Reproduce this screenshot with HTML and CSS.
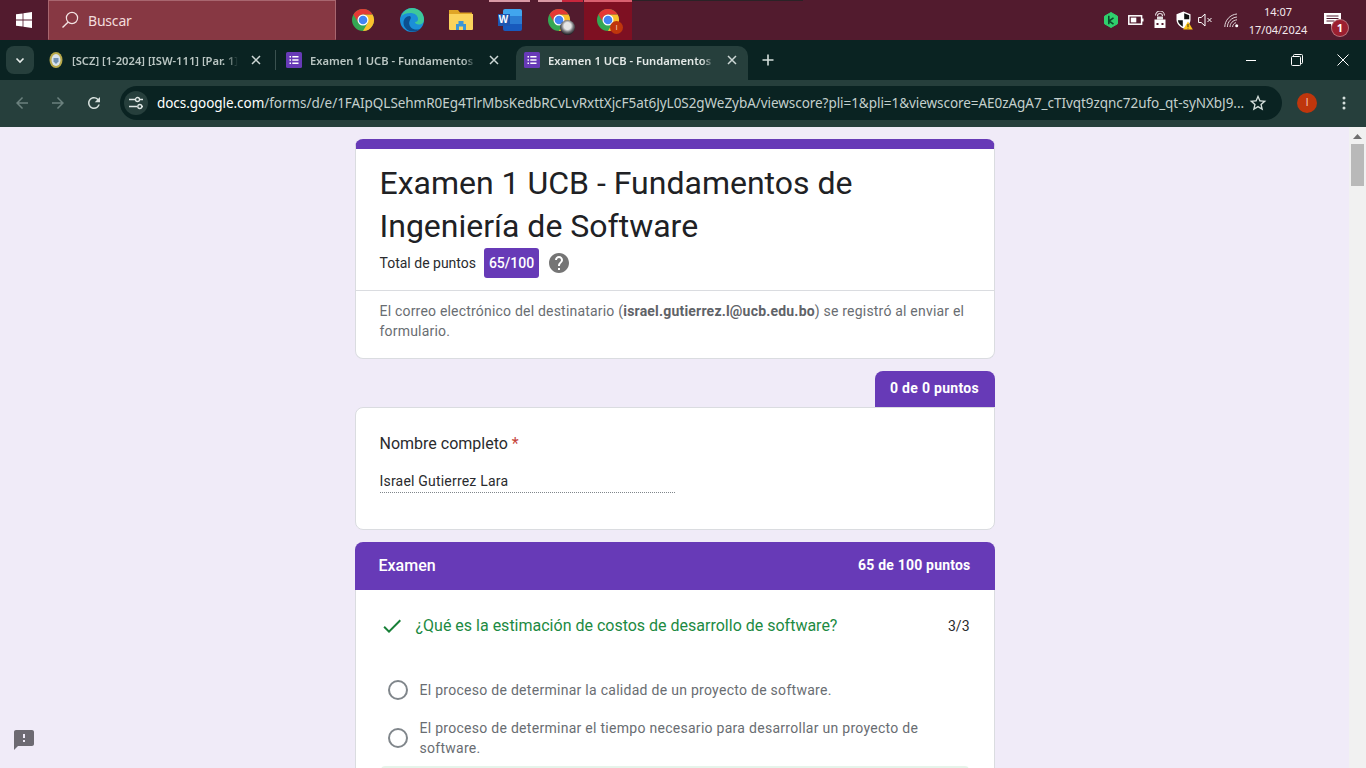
FILE: index.html
```html
<!DOCTYPE html>
<html lang="es">
<head>
<meta charset="utf-8">
<title>Examen 1 UCB - Fundamentos de Ingeniería de Software</title>
<link rel="stylesheet" href="styles.css">
</head>
<body>
<svg class="defs" aria-hidden="true">
  <symbol id="chrome" viewBox="0 0 24 24">
    <circle cx="12" cy="12" r="11" fill="#34a853"/>
    <path d="M12 6.5H21.53A11 11 0 0 1 12 23L16.76 14.75z" fill="#fbc02d"/>
    <path d="M21.53 6.5H12a5.5 5.5 0 0 0-4.76 8.25L2.47 6.5A11 11 0 0 1 21.53 6.5z" fill="#e53935"/>
    <circle cx="12" cy="12" r="5.5" fill="#fff"/>
    <circle cx="12" cy="12" r="4.3" fill="#4285f4"/>
  </symbol>
  <symbol id="form" viewBox="0 0 16 16">
    <rect width="16" height="16" rx="1.5" fill="#673ab7"/>
    <path d="M3.5 4h1.5v1.5H3.5zM6.3 4h6.2v1.5H6.3zM3.5 7.2h1.5v1.5H3.5zM6.3 7.2h6.2v1.5H6.3zM3.5 10.4h1.5v1.5H3.5zM6.3 10.4h6.2v1.5H6.3z" fill="#fff"/>
  </symbol>
  <symbol id="x" viewBox="0 0 12 12">
    <path d="M2 2l8 8M10 2l-8 8" fill="none" stroke="currentColor" stroke-width="1.5"/>
  </symbol>
</svg>

<div class="taskbar">
  <div class="start">
    <svg width="16" height="16" viewBox="0 0 16 16"><path d="M0 2.3l6.6-.9v6.2H0zM7.4 1.3L16 0v7.6H7.4zM0 8.4h6.6v6.2L0 13.7zM7.4 8.4H16V16l-8.6-1.2z" fill="#fff"/></svg>
  </div>
  <div class="search">
    <svg width="18" height="18" viewBox="0 0 18 18"><circle cx="11" cy="7" r="5.6" fill="none" stroke="#f3e3e3" stroke-width="1.2"/><path d="M7 11.2L1.5 16.5" stroke="#f3e3e3" stroke-width="1.4"/></svg>
    <span>Buscar</span>
  </div>
  <div class="apps">
    <div class="app"><svg width="24" height="24"><use href="#chrome"/></svg></div>
    <div class="app">
      <svg width="24" height="24" viewBox="0 0 24 24">
        <circle cx="12" cy="12" r="12" fill="#1b8fd8"/>
        <path d="M1 9C3 3 8 0 12 0c7 0 12 5 12 11.500 0 3-2 5-5 5-2.500 0-4-1-4-2.500 2 0 3-1 3-3C18 7 14 5 10.500 5 6 5 2.500 6.500 1 9z" fill="#3ec89a"/>
        <path d="M10 8c-4 0-6.500 3-6.500 7 0 4 3.500 8 8.500 8.500 3 .3 6-.5 8-2.500-3 1-7 .7-9-1.500-2-2.200-2.500-5-1-7.500 .7-1.300 1.500-2.800 0-4z" fill="#0c4f8f"/>
      </svg>
    </div>
    <div class="app">
      <svg width="24" height="22" viewBox="0 0 24 22">
        <path d="M0 1h9l2 2.500h12V8H0z" fill="#e0a526"/>
        <path d="M0 5h24v15a1 1 0 0 1-1 1H1a1 1 0 0 1-1-1z" fill="#fbd35c"/>
        <path d="M7 21v-6h2.500v-3h5v3H17v6h-3v-3.500h-4V21z" fill="#3d96d6"/>
      </svg>
    </div>
    <div class="app running">
      <div class="word">
        <i class="w1"></i><i class="w2"></i><i class="w3"></i>
        <b>W</b>
      </div>
    </div>
    <div class="app running second-run">
      <div class="badged">
        <svg width="24" height="24"><use href="#chrome"/></svg>
        <span class="mini-photo"></span>
      </div>
    </div>
    <div class="app active">
      <div class="badged">
        <svg width="24" height="24"><use href="#chrome"/></svg>
        <span class="mini-i">I</span>
      </div>
    </div>
  </div>
  <div class="tray">
    <div class="ti kasp">
      <svg width="16" height="16" viewBox="0 0 16 16"><path d="M8 .5l6.500 3.700v7.600L8 15.500l-6.500-3.700V4.200z" fill="#2fd06d" stroke="#2fd06d" stroke-linejoin="round"/><path d="M5.800 3.800v8.400M10.500 5.800L6 9l4.500 3.200" fill="none" stroke="#0b4a2b" stroke-width="1.600"/></svg>
    </div>
    <div class="ti">
      <svg width="16" height="12" viewBox="0 0 16 12"><rect x=".8" y="1.800" width="12.800" height="8.400" fill="none" stroke="#fff" stroke-width="1.500"/><rect x="2.800" y="3.600" width="5.500" height="4.800" fill="#fff"/><rect x="14" y="4.500" width="1.500" height="3" fill="#fff"/></svg>
    </div>
    <div class="ti">
      <svg width="14" height="18" viewBox="0 0 14 18"><path d="M2.500 4.500a4.500 4.500 0 0 1 9 0M4.500 5a2.500 2.500 0 0 1 5 0" fill="none" stroke="#e8e0e3" stroke-width="1.100"/><rect x="4" y="5.500" width="6" height="3" fill="#ddd"/><rect x="1.500" y="8.500" width="11" height="8.500" fill="#fff"/><rect x="3.500" y="12" width="2" height="2" fill="#521b2e"/><rect x="8.500" y="12" width="2" height="2" fill="#521b2e"/></svg>
    </div>
    <div class="ti">
      <svg width="17" height="19" viewBox="0 0 17 19"><path d="M7.500 .5L14.500 3.200v5.300c0 4-2.700 6.900-7 9-4.300-2.100-7-5-7-9V3.200z" fill="#fff"/><path d="M8.200 2.300l5 1.900v4H8.200zM6.800 9.300v6.400C4 14 2.200 12 1.900 9.300z" fill="#111"/><path d="M12 10.500l4.800 8h-9.600z" fill="#fcc419"/><path d="M11.600 13h.8v3h-.8zM11.600 16.800h.8v.8h-.8z" fill="#111"/></svg>
    </div>
    <div class="ti speaker">
      <svg width="15" height="14" viewBox="0 0 15 14"><path d="M.6 4.500h2.600L7 1v12L3.200 9.500H.6z" fill="none" stroke="#fff" stroke-width="1"/><path d="M9.500 5l4 4M13.500 5l-4 4" stroke="#fff" stroke-width="1"/></svg>
    </div>
    <div class="ti">
      <svg width="16" height="15" viewBox="0 0 16 15"><path d="M.8 14C.8 7.500 6 1.500 13 1M3.400 14c0-5 4-9.500 9.600-10M6 14c0-3.500 2.800-6.800 7-7.200M8.600 14c0-2 1.500-4 3.400-4.300" fill="none" stroke="#e3d8dc" stroke-width="1"/><circle cx="12.700" cy="12.700" r="1.500" fill="#fff"/></svg>
    </div>
    <div class="clock"><span>14:07</span><span>17/04/2024</span></div>
    <div class="notif">
      <svg width="17" height="15" viewBox="0 0 17 15"><path d="M0 0h17v11H10l-3 3v-3H0z" fill="#fff"/><path d="M2.500 3h12M2.500 5.500h12M2.500 8h8" stroke="#521b2e" stroke-width="1"/></svg>
      <span class="notif-count">1</span>
    </div>
  </div>
</div>

<div class="tabstrip">
  <div class="tab-menu">
    <svg width="12" height="12" viewBox="0 0 12 12"><path d="M2.500 4.500L6 8l3.500-3.500" fill="none" stroke="#e6ecea" stroke-width="1.600"/></svg>
  </div>
  <div class="tab first">
    <svg class="fav" width="16" height="16" viewBox="0 0 16 16"><ellipse cx="8" cy="8" rx="6.500" ry="8" fill="#b9a94a"/><ellipse cx="8" cy="8" rx="4.500" ry="6" fill="#d8e2ea"/><path d="M5.500 6h5v3.500L8 12 5.500 9.500z" fill="#6f8fb3"/></svg>
    <span class="tab-title">[SCZ] [1-2024] [ISW-111] [Par. 1]</span>
    <svg class="tab-x" width="12" height="12"><use href="#x"/></svg>
  </div>
  <div class="tab-sep"></div>
  <div class="tab second">
    <svg class="fav" width="16" height="16"><use href="#form"/></svg>
    <span class="tab-title">Examen 1 UCB - Fundamentos de Ingeniería</span>
    <svg class="tab-x" width="12" height="12"><use href="#x"/></svg>
  </div>
  <div class="tab third">
    <svg class="fav" width="16" height="16"><use href="#form"/></svg>
    <span class="tab-title">Examen 1 UCB - Fundamentos de Ingeniería</span>
    <svg class="tab-x" width="12" height="12"><use href="#x"/></svg>
  </div>
  <svg class="new-tab" width="14" height="14" viewBox="0 0 14 14"><path d="M7 1.500v11M1.500 7h11" stroke="#d5dfdc" stroke-width="1.600"/></svg>
  <div class="win-controls">
    <div class="wc"><svg width="12" height="12" viewBox="0 0 12 12"><path d="M1 6.500h10" stroke="#fff" stroke-width="1"/></svg></div>
    <div class="wc"><svg width="12" height="12" viewBox="0 0 12 12"><rect x=".5" y="2.500" width="9" height="9" rx="1" fill="none" stroke="#fff"/><path d="M2.500 2.500V1.500a1 1 0 0 1 1-1h7a1 1 0 0 1 1 1v7a1 1 0 0 1-1 1H9.500" fill="none" stroke="#fff"/></svg></div>
    <div class="wc"><svg width="12" height="12" viewBox="0 0 12 12"><path d="M.5.500l11 11M11.500.500l-11 11" stroke="#fff" stroke-width="1"/></svg></div>
  </div>
</div>

<div class="toolbar">
  <div class="nav-btn dim"><svg width="18" height="18" viewBox="0 0 24 24"><path d="M20 11H7.830l5.590-5.590L12 4l-8 8 8 8 1.410-1.410L7.830 13H20v-2z"/></svg></div>
  <div class="nav-btn dim"><svg width="18" height="18" viewBox="0 0 24 24"><path d="M4 11h12.170l-5.590-5.590L12 4l8 8-8 8-1.410-1.410L16.170 13H4v-2z"/></svg></div>
  <div class="nav-btn"><svg width="18" height="18" viewBox="0 0 24 24"><path d="M17.650 6.350A7.958 7.958 0 0 0 12 4c-4.420 0-7.990 3.580-7.990 8s3.570 8 7.990 8c3.730 0 6.840-2.550 7.730-6h-2.080A5.990 5.990 0 0 1 12 18c-3.310 0-6-2.690-6-6s2.690-6 6-6c1.660 0 3.140.69 4.220 1.780L13 11h7V4l-2.350 2.350z"/></svg></div>
  <div class="omnibox">
    <div class="tune"><svg width="16" height="16" viewBox="0 0 16 16"><path d="M1 4.500h6M1 11.500h8" stroke="#dfe7e5" stroke-width="1.400"/><path d="M12 4.500h3M14 11.500h1" stroke="#dfe7e5" stroke-width="1.400"/><circle cx="9.500" cy="4.500" r="2" fill="none" stroke="#dfe7e5" stroke-width="1.300"/><circle cx="11.800" cy="11.500" r="2" fill="none" stroke="#dfe7e5" stroke-width="1.300"/></svg></div>
    <div class="url"><span class="host">docs.google.com</span>/forms/d/e/1FAIpQLSehmR0Eg4TlrMbsKedbRCvLvRxttXjcF5at6JyL0S2gWeZybA/viewscore?pli=1&amp;pli=1&amp;viewscore=AE0zAgA7_cTIvqt9zqnc72ufo_qt-syNXbJ9...</div>
    <svg class="star" width="20" height="20" viewBox="0 0 24 24"><path d="M22 9.240l-7.190-.62L12 2 9.190 8.630 2 9.240l5.460 4.730L5.820 21 12 17.270 18.180 21l-1.630-7.030L22 9.240zM12 15.400l-3.760 2.270 1-4.280-3.320-2.880 4.380-.38L12 6.100l1.710 4.040 4.380.38-3.320 2.880 1 4.280L12 15.400z"/></svg>
  </div>
  <div class="avatar">I</div>
  <svg class="kebab" width="4" height="14" viewBox="0 0 4 14"><circle cx="2" cy="2" r="1.500"/><circle cx="2" cy="7" r="1.500"/><circle cx="2" cy="12" r="1.500"/></svg>
</div>

<div class="viewport">
  <main class="page">
    <div class="column">
      <section class="card head-card">
        <div class="head-main">
          <h1>Examen 1 UCB - Fundamentos de Ingeniería de Software</h1>
          <div class="total">
            <span>Total de puntos</span>
            <span class="score">65/100</span>
            <svg class="help" width="24" height="24" viewBox="0 0 24 24"><path d="M12 2C6.480 2 2 6.480 2 12s4.480 10 10 10 10-4.480 10-10S17.520 2 12 2zm1 17h-2v-2h2v2zm2.070-7.750l-.9.92C13.450 12.900 13 13.500 13 15h-2v-.5c0-1.100.45-2.100 1.170-2.830l1.240-1.260c.37-.36.59-.86.59-1.410 0-1.100-.9-2-2-2s-2 .9-2 2H8c0-2.210 1.790-4 4-4s4 1.790 4 4c0 .88-.36 1.680-.93 2.250z"/></svg>
          </div>
        </div>
        <p class="recipient">El correo electrónico del destinatario (<b>israel.gutierrez.l@ucb.edu.bo</b>) se registró al enviar el formulario.</p>
      </section>

      <div class="pill-row"><span class="pill">0 de 0 puntos</span></div>
      <section class="card name-card">
        <div class="name-label">Nombre completo <span class="req">*</span></div>
        <div class="name-value">Israel Gutierrez Lara</div>
      </section>

      <section class="card exam-card">
        <header class="exam-head">
          <span class="exam-title">Examen</span>
          <span class="exam-score">65 de 100 puntos</span>
        </header>
        <div class="question">
          <svg class="check" width="24" height="24" viewBox="0 0 24 24"><path d="M9 16.170L4.830 12l-1.420 1.410L9 19 21 7l-1.410-1.410z"/></svg>
          <span class="q-text">¿Qué es la estimación de costos de desarrollo de software?</span>
          <span class="q-score">3/3</span>
        </div>
        <div class="option">
          <span class="radio"></span>
          <span class="opt-text">El proceso de determinar la calidad de un proyecto de software.</span>
        </div>
        <div class="option">
          <span class="radio"></span>
          <span class="opt-text">El proceso de determinar el tiempo necesario para desarrollar un proyecto de software.</span>
        </div>
        <div class="option-correct"></div>
      </section>
    </div>
  </main>
  <div class="scrollbar">
    <svg class="sb-arrow" width="9" height="5" viewBox="0 0 9 5"><path d="M4.500 0L9 5H0z"/></svg>
    <div class="sb-thumb"></div>
  </div>
  <svg class="feedback" width="24" height="24" viewBox="0 0 24 24"><path d="M20 2H4c-1.100 0-1.990.9-1.990 2L2 22l4-4h14c1.100 0 2-.9 2-2V4c0-1.100-.9-2-2-2zm-7 12h-2v-2h2v2zm0-4h-2V6h2v4z"/></svg>
</div>
</body>
</html>
```
FILE: styles.css
```css
* { box-sizing: border-box; }
html, body { margin: 0; padding: 0; height: 100%; overflow: hidden; }
body {
  width: 1366px;
  height: 768px;
  display: flex;
  flex-direction: column;
  font-family: Roboto, "Liberation Sans", sans-serif;
  background: #f0ebf8;
}
.defs { display: none; }

/* Taskbar */
.taskbar {
  flex: 0 0 40px;
  display: flex;
  position: relative;
  background: #521b2e;
  color: #fff;
}
.taskbar::after {
  content: "";
  position: absolute;
  top: 0; left: 632px;
  width: 171px;
  height: 1px;
  background: #2a2226;
}
.start { width: 48px; display: flex; align-items: center; justify-content: center; }
.search {
  width: 288px;
  display: flex;
  align-items: center;
  gap: 9px;
  padding-left: 12px;
  background: #873843;
  border: 1px solid #a8666f;
  border-bottom-color: #873843;
  font: 14px "Noto Sans", sans-serif;
  letter-spacing: -.2px;
  color: #f2dcdc;
}
.apps { display: flex; margin-left: 2px; }
.app {
  width: 49px;
  display: flex;
  align-items: center;
  justify-content: center;
  position: relative;
}
.app.running::before {
  content: "";
  position: absolute;
  top: 0; left: 4px; right: 4px;
  height: 2px;
  background: #d99aa5;
}
.app.second-run::before {
  right: 0;
  background: linear-gradient(to right, #d99aa5 0 24px, #c8263c 24px);
}
.app.active { background: #7e1022; width: 48px; margin-left: 1px; }
.app.active::before {
  content: "";
  position: absolute;
  top: 0; left: 0; right: 0;
  height: 2px;
  background: #d9606f;
}
.word { position: relative; width: 24px; height: 22px; }
.word i { position: absolute; left: 5px; right: 0; height: 7.33px; }
.w1 { top: 0; background: #41a5ee; border-radius: 2px 2px 0 0; }
.w2 { top: 7.33px; background: #2b7cd3; }
.w3 { top: 14.66px; background: #185abd; border-radius: 0 0 2px 2px; }
.word b {
  position: absolute;
  left: 0; top: 5px;
  width: 12px; height: 12px;
  background: #1d56b0;
  color: #fff;
  font: 700 10px/12px "Liberation Sans", sans-serif;
  text-align: center;
}
.badged { position: relative; width: 24px; height: 24px; }
.mini-photo {
  position: absolute;
  right: -4px; bottom: -3px;
  width: 15px; height: 15px;
  border-radius: 50%;
  background: radial-gradient(circle at 50% 40%, #e5e5e5 0 30%, #77777c 50%, #1e1e22 75%);
}
.mini-i {
  position: absolute;
  right: -3px; bottom: -2px;
  width: 13px; height: 13px;
  border-radius: 50%;
  background: #bf360c;
  color: #f4c9b8;
  font: 8px/13px Roboto, sans-serif;
  text-align: center;
}
.tray { margin-left: auto; display: flex; align-items: center; }
.ti { width: 24px; display: flex; align-items: center; justify-content: center; }
.ti.kasp { padding-right: 3px; }
.ti.speaker { padding-right: 6px; }
.clock {
  width: 70px;
  margin-left: -1px;
  display: flex;
  flex-direction: column;
  align-items: center;
  gap: 3px;
  font: 11px/15px "Noto Sans", sans-serif;
  color: #f3e9ec;
}
.notif { position: relative; width: 53px; display: flex; padding-left: 11px; }
.notif-count {
  position: absolute;
  left: 19px; top: 7px;
  width: 16px; height: 16px;
  border-radius: 50%;
  background: #9c1f30;
  box-shadow: 0 0 0 1px #b9757f;
  font: 700 11px/16px "Noto Sans", sans-serif;
  text-align: center;
}

/* Tab strip */
.tabstrip {
  flex: 0 0 40px;
  display: flex;
  align-items: flex-end;
  background: #0a2322;
  position: relative;
}
.tab-menu {
  width: 28px; height: 28px;
  margin: 0 0 6px 6px;
  border-radius: 8px;
  background: #263f3c;
  display: flex; align-items: center; justify-content: center;
}
.tab {
  display: flex;
  align-items: center;
  height: 34px;
  padding-bottom: 6px;
  font: 600 11.200px "Noto Sans", sans-serif;
  color: #b9c5c2;
}
.fav { flex: none; margin-right: 8px; }
.tab-title {
  flex: 1;
  min-width: 0;
  overflow: hidden;
  white-space: nowrap;
  -webkit-mask-image: linear-gradient(to left, transparent 0, #000 12px);
  mask-image: linear-gradient(to left, transparent 0, #000 12px);
}
.tab-x { flex: none; margin-left: 12px; color: #cdd7d5; }
.tab.first { margin-left: 14px; width: 227px; padding-right: 13px; }
.tab-sep { width: 1px; height: 20px; margin: 0 0 10px 0; background: #3a514f; }
.tab.second { margin-left: 10px; width: 214px; }
.tab.third {
  margin-left: 16px;
  width: 232px;
  padding-left: 8px;
  padding-right: 10px;
  background: #263f3c;
  border-radius: 10px 10px 0 0;
  color: #e3e9e7;
}
.new-tab { margin: 0 0 13px 13px; }
.win-controls { margin-left: auto; align-self: stretch; display: flex; align-items: center; }
.wc { width: 46px; display: flex; justify-content: center; }

/* Toolbar */
.toolbar {
  flex: 0 0 47px;
  display: flex;
  align-items: center;
  background: #263f3c;
  padding: 0 0 1px 4px;
  fill: #d5dfdc;
}
.nav-btn { width: 36px; display: flex; justify-content: center; }
.nav-btn.dim { fill: #6b817e; }
.omnibox {
  flex: 0 0 1162px;
  height: 34px;
  margin-left: 8px;
  display: flex;
  align-items: center;
  border-radius: 17px;
  background: #0a2322;
}
.tune {
  flex: none;
  width: 24px; height: 24px;
  margin-left: 4px;
  border-radius: 50%;
  background: #263f3c;
  display: flex; align-items: center; justify-content: center;
}
.url {
  flex: none;
  width: 1090px;
  margin-left: 9px;
  overflow: hidden;
  white-space: nowrap;
  font: 13.500px "Noto Sans", sans-serif;
  letter-spacing: -.05px;
  color: #c4d0cd;
}
.host { color: #fff; }
.star { margin-left: 1px; flex: none; }
.avatar {
  width: 20px; height: 20px;
  margin-left: 15px;
  border-radius: 50%;
  background: #bf360c;
  color: #f4c9b8;
  font: 10px/20px Roboto, sans-serif;
  text-align: center;
}
.kebab { margin-left: 25px; }

/* Page */
.viewport { flex: 1; min-height: 0; display: flex; position: relative; background: #f0ebf8; }
.page { flex: 1; min-width: 0; overflow: hidden; display: flex; justify-content: center; padding-top: 12px; }
.column { width: 640px; flex: none; display: flex; flex-direction: column; }
.card {
  background: #fff;
  border: 1px solid #dadce0;
  border-radius: 8px;
  flex: none;
}
.head-card {
  height: 220px;
  border-top: 10px solid #673ab7;
  margin-bottom: 12px;
}
.head-main { padding: 13px 24px 0; height: 142px; border-bottom: 1px solid #dadce0; }
h1 {
  margin: 0;
  font: 400 32px/43px Roboto, sans-serif;
  color: #202124;
}
.total {
  display: flex;
  align-items: center;
  font-size: 14px;
  color: #2a2b2e;
}
.score {
  margin-left: 8px;
  width: 55px; height: 30px;
  border-radius: 3px;
  background: #673ab7;
  color: #fff;
  font-weight: 500;
  line-height: 30px;
  text-align: center;
}
.help { margin-left: 8px; fill: #757575; }
.recipient {
  margin: 0;
  padding: 10px 24px 0;
  font-size: 14px;
  line-height: 20px;
  letter-spacing: .2px;
  color: #696d72;
}
.recipient b { font-weight: 700; color: #5f6368; }
.pill-row { display: flex; justify-content: flex-end; }
.pill {
  width: 120px; height: 36px;
  border-radius: 8px 8px 0 0;
  background: #673ab7;
  color: #fff;
  font-size: 14px;
  font-weight: 700;
  letter-spacing: .3px;
  line-height: 34px;
  text-align: center;
}
.name-card {
  height: 123px;
  margin-bottom: 12px;
  padding: 25px 24px 0;
  border-top-right-radius: 0;
}
.name-label { font-size: 16px; line-height: 22px; color: #2a2b2e; }
.req { color: #c5443a; }
.name-value {
  width: 295px;
  margin-top: 16px;
  padding-bottom: 1px;
  border-bottom: 1px dotted #80868b;
  font-size: 14px;
  line-height: 20px;
  letter-spacing: .2px;
  color: #2a2b2e;
}
.exam-card { border: 0; border-radius: 8px 8px 0 0; border-left: 1px solid #dadce0; border-right: 1px solid #dadce0; }
.exam-head {
  display: flex;
  align-items: center;
  justify-content: space-between;
  height: 48px;
  margin: 0 -1px;
  padding: 0 24px 2px 24px;
  background: #673ab7;
  border-radius: 8px 8px 0 0;
  color: #fff;
}
.exam-title { font-size: 16px; font-weight: 500; }
.exam-score { font-size: 14px; font-weight: 700; letter-spacing: .2px; }
.question { display: flex; align-items: flex-start; padding: 24px 24px 0 24px; height: 81px; }
.check { fill: #188038; flex: none; margin-right: 12px; }
.q-text { flex: 1; font-size: 16px; line-height: 24px; color: #1c8a42; }
.q-score { font-size: 14px; line-height: 24px; color: #2a2b2e; }
.option { display: flex; align-items: center; padding: 9px 48px 9px 32px; }
.radio {
  flex: none;
  width: 20px; height: 20px;
  margin-right: 12px;
  border: 2px solid #80868b;
  border-radius: 50%;
}
.opt-text { font-size: 14px; line-height: 20px; letter-spacing: .28px; color: #696d72; }
.option-correct {
  height: 60px;
  margin: -1px 25px 0;
  background: #e6f4ea;
  border-radius: 4px 4px 0 0;
}

/* Scrollbar */
.scrollbar {
  flex: 0 0 17px;
  background: #f1f1f1;
  display: flex;
  flex-direction: column;
  align-items: center;
  padding-top: 7px;
}
.sb-arrow { fill: #6f6f6f; }
.sb-thumb { width: 13px; height: 42px; margin-top: 5px; background: #b9b9b9; }
.feedback { position: absolute; left: 12px; bottom: 16px; fill: #6d6a72; }
```
